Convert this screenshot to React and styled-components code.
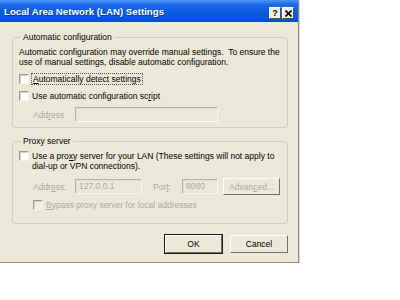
import React from "react";
import styled, { createGlobalStyle } from "styled-components";

const GlobalStyle = createGlobalStyle`
  body {
    margin: 0;
    background: #fff;
    font-family: "Liberation Sans", Arial, sans-serif;
  }
`;

export default function App() {
  return (
    <>
      <GlobalStyle />
      <Window>
        <TitleBar>
          <Title>Local Area Network (LAN) Settings</Title>
          <Caption>
            <CaptionButton>?</CaptionButton>
            <CaptionButton>
              <svg width="7" height="7" viewBox="0 0 7 7">
                <path d="M0.5 0.5 L6.5 6.5 M6.5 0.5 L0.5 6.5" stroke="#000" strokeWidth="1.6" />
              </svg>
            </CaptionButton>
          </Caption>
        </TitleBar>

        <Body>
          <Group $pb={5}>
            <Legend>Automatic configuration</Legend>
            <Para>
              Automatic configuration may override manual settings.&nbsp; To ensure the
              <br />
              use of manual settings, disable automatic configuration.
            </Para>
            <CheckRow $mt={6}>
              <Box />
              <Focus>
                <U>A</U>utomatically detect settings
              </Focus>
            </CheckRow>
            <CheckRow $mt={6}>
              <Box />
              <span>
                Use automatic configuration sc<U>r</U>ipt
              </span>
            </CheckRow>
            <FieldRow $indent={14} $mt={6}>
              <Label $width={42}>
                Add<U>r</U>ess
              </Label>
              <Input $width={143} />
            </FieldRow>
          </Group>

          <Group $pb={13} $mt={8}>
            <Legend>Proxy server</Legend>
            <CheckRow $top>
              <Box />
              <span>
                Use a pro<U>x</U>y server for your LAN (These settings will not apply to
                <br />
                dial-up or VPN connections).
              </span>
            </CheckRow>
            <FieldRow $indent={14} $mt={7}>
              <Label $width={42}>
                Addr<U>e</U>ss:
              </Label>
              <Input $width={67}>127.0.0.1</Input>
              <Label $width={29} $pad={11}>
                Por<U>t</U>:
              </Label>
              <Input $width={36}>8080</Input>
              <Button $width={57} $h={17} $disabled $ml={5}>
                Advan<U>c</U>ed...
              </Button>
            </FieldRow>
            <CheckRow $indent={14} $mt={4}>
              <Box $disabled />
              <Dim>
                <U>B</U>ypass proxy server for local addresses
              </Dim>
            </CheckRow>
          </Group>

          <Footer>
            <Button $width={57} $h={18} $default>
              OK
            </Button>
            <Button $width={58} $h={18}>
              Cancel
            </Button>
          </Footer>
        </Body>
      </Window>
    </>
  );
}

const Window = styled.div`
  width: 298px;
  height: 262px;
  background: #ece9d8;
  border-right: 1px solid #8d8b80;
  border-bottom: 1px solid #8d8b80;
  box-shadow: 1px 1px 0 #d8d6cc;
  display: flex;
  flex-direction: column;
  font-size: 8.5px;
  color: #000;
`;

const TitleBar = styled.div`
  height: 22px;
  flex: none;
  display: flex;
  align-items: center;
  justify-content: space-between;
  padding: 0 4px 0 4px;
  background: linear-gradient(#4a96f8 0%, #1d6ae8 20%, #0a5ce2 55%, #0855dc 85%, #0848c8 100%);
  box-sizing: border-box;
`;

const Title = styled.div`
  color: #fff;
  font-weight: bold;
  font-size: 9.7px;
  text-shadow: 1px 1px 0 #0a3a9a;
`;

const Caption = styled.div`
  display: flex;
  gap: 1px;
  margin-top: 4px;
`;

const CaptionButton = styled.div`
  width: 10px;
  height: 10px;
  background: #f1efe4;
  border: 1px solid;
  border-color: #fff #55544c #55544c #fff;
  display: flex;
  align-items: center;
  justify-content: center;
  font-weight: bold;
  font-size: 9px;
  line-height: 1;
  color: #000;
`;

const Body = styled.div`
  flex: 1;
  display: flex;
  flex-direction: column;
  padding: 10px 10px 0 12px;
`;

const Group = styled.fieldset`
  margin: ${(p) => p.$mt || 0}px 0 0 0;
  padding: 5px 6px ${(p) => p.$pb}px 6px;
  border: 1px solid #d0d0bf;
  border-radius: 3px;
  display: flex;
  flex-direction: column;
`;

const Legend = styled.legend`
  padding: 0 2px;
  margin-left: 2px;
  font-size: 8.5px;
  line-height: 10px;
`;

const Para = styled.div`
  line-height: 10px;
`;

const CheckRow = styled.div`
  display: flex;
  align-items: ${(p) => (p.$top ? "flex-start" : "center")};
  gap: 3px;
  line-height: 10px;
  margin-top: ${(p) => p.$mt || 0}px;
  padding-left: ${(p) => p.$indent || 0}px;
  min-height: 11px;
`;

const Box = styled.span`
  flex: none;
  width: 8px;
  height: 8px;
  background: ${(p) => (p.$disabled ? "#f2f0e6" : "#fff")};
  border: 1px solid;
  border-color: #9c9a8c #f4f3ee #f4f3ee #9c9a8c;
  box-shadow: inset 1px 1px 0 #d6d4c8;
`;

const Focus = styled.span`
  outline: 1px dotted #555;
  padding: 0 1px;
`;

const U = styled.span`
  text-decoration: underline;
`;

const Dim = styled.span`
  color: #aca899;
`;

const FieldRow = styled.div`
  display: flex;
  align-items: center;
  margin-top: ${(p) => p.$mt || 0}px;
  padding-left: ${(p) => p.$indent}px;
`;

const Label = styled.span`
  width: ${(p) => p.$width}px;
  padding-left: ${(p) => p.$pad || 0}px;
  color: #aca899;
  flex: none;
`;

const Input = styled.div`
  width: ${(p) => p.$width}px;
  height: 15px;
  box-sizing: border-box;
  border: 1px solid;
  border-color: #b7b4a4 #f8f7f2 #f8f7f2 #b7b4a4;
  box-shadow: inset 1px 1px 0 #e0ded2;
  background: #ece9d8;
  color: #aca899;
  padding-left: 3px;
  line-height: 13px;
  flex: none;
`;

const Button = styled.div`
  width: ${(p) => p.$width}px;
  height: ${(p) => p.$h}px;
  margin-left: ${(p) => p.$ml || 0}px;
  box-sizing: border-box;
  border: 1px solid;
  border-color: #fff #716f64 #716f64 #fff;
  outline: ${(p) => (p.$default ? "1px solid #1a1a1a" : "none")};
  background: #ece9d8;
  display: flex;
  align-items: center;
  justify-content: center;
  color: ${(p) => (p.$disabled ? "#aca899" : "#000")};
  flex: none;
`;

const Footer = styled.div`
  display: flex;
  justify-content: flex-end;
  align-items: flex-start;
  gap: 8px;
  margin-top: 11px;
`;
